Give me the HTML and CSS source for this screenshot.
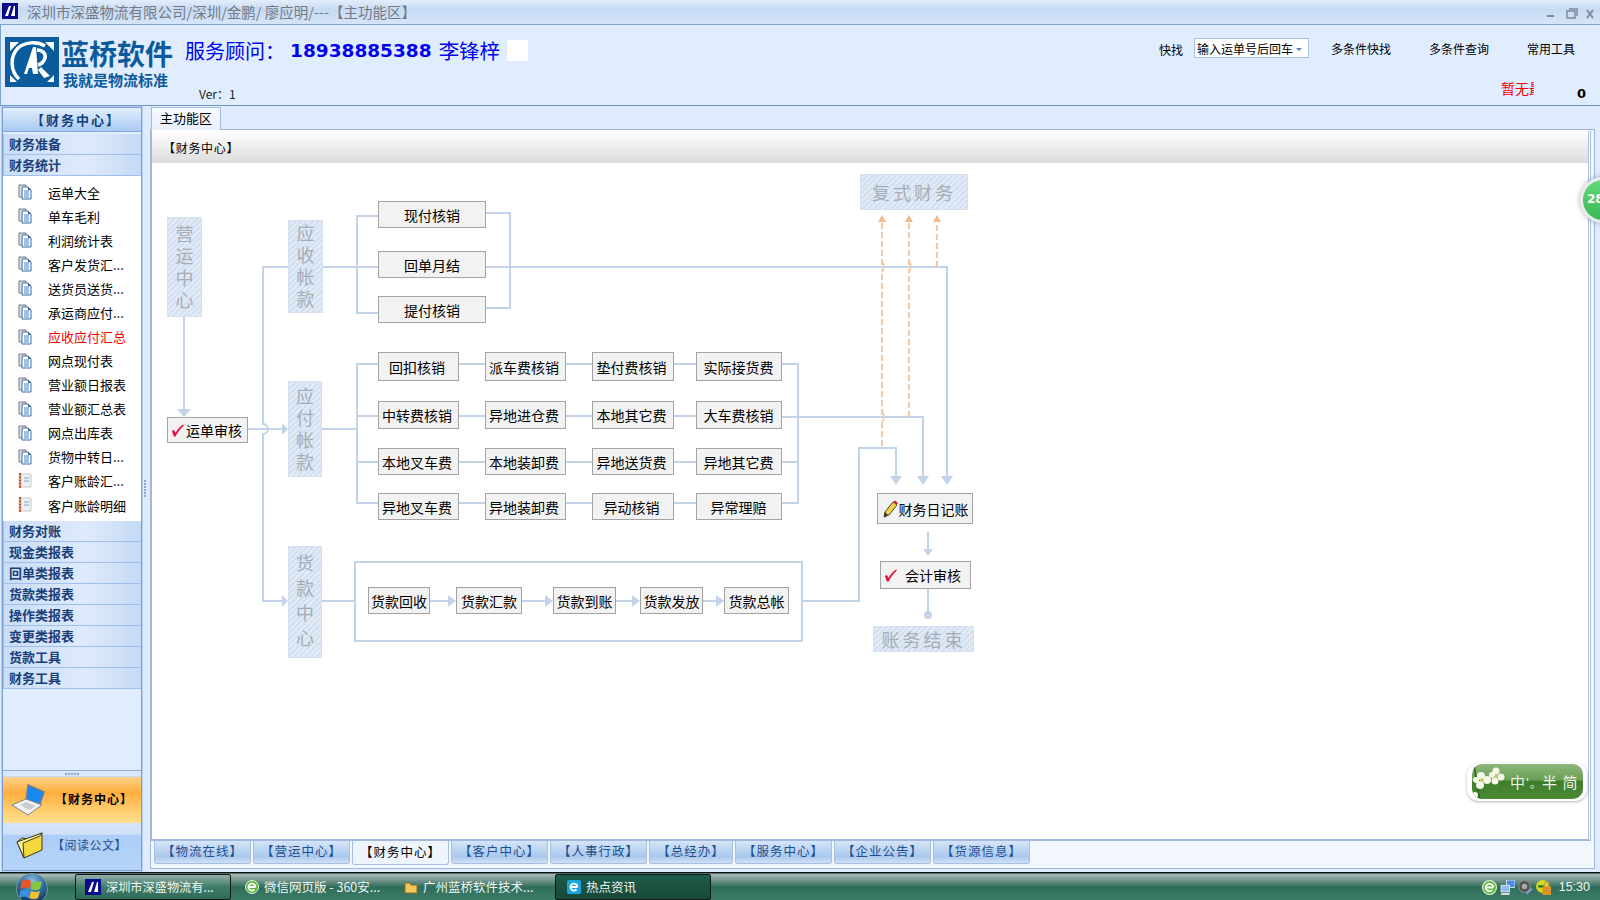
FILE: index.html
```html
<!DOCTYPE html>
<html lang="zh-CN">
  <head>
    <title>深圳市深盛物流有限公司 - 主功能区</title>
    <meta charset="UTF-8" />
    <link rel="stylesheet" href="styles.css">
  </head>
  <body>
    <svg class="defs" width="0" height="0">
      <symbol id="i-doc" viewBox="0 0 14 16">
        <path d="M1 1h7v12H1z" fill="#dfe4ea" stroke="#6f7884"/>
        <path d="M4 3h6l3 3v9H4z" fill="#fff" stroke="#3f6a9e"/>
        <path d="M10 3l3 3h-3z" fill="#2f5f9e"/>
        <path d="M6 7h5M6 9h5M6 11h5M6 13h5" stroke="#3b82d8"/>
      </symbol>
      <symbol id="i-book" viewBox="0 0 14 16">
        <path d="M3 1h10v13H3z" fill="#eef0f2" stroke="#c6cad0"/>
        <path d="M2 0v15" stroke="#b5562e" stroke-width="2"/>
        <path d="M0 3h3M0 6h3M0 9h3M0 12h3" stroke="#e8c8a8"/>
        <path d="M6 5h5M6 8h5" stroke="#7ea6d6"/>
      </symbol>
      <symbol id="i-check" viewBox="0 0 14 14">
        <path d="M1 8l2-1 2 3C7 6 10 3 13 1l1 1C10 6 7 10 5 14H3z" fill="#e8103c"/>
      </symbol>
      <symbol id="i-ie" viewBox="0 0 14 14">
        <circle cx="7" cy="7" r="6.500" fill="#5cb83a" stroke="#e4f4dc"/>
        <path d="M3.500 7h7M10.500 7a3.500 3.500 0 1 0-1 2.500" fill="none" stroke="#fff" stroke-width="1.800"/>
      </symbol>
    </svg>

    <div class="titlebar">
      <svg class="app-icon" viewBox="0 0 16 16"><rect width="16" height="16" fill="#0a0a8c"/><path d="M3 13L7 3h2L6 13zM9 13l3-10h1v10z" fill="#fff"/></svg>
      <span class="title-text">深圳市深盛物流有限公司/深圳/金鹏/ 廖应明/---【主功能区】</span>
      <div class="win-btns">
        <svg width="48" height="12" viewBox="0 0 48 12">
          <path d="M0 7h7v2H0z" fill="#7e8a99"/>
          <path d="M20 3h8v7h-8zM22 1h8v7" fill="none" stroke="#7e8a99" stroke-width="1.5"/>
          <path d="M40 2l6 8M46 2l-6 8" stroke="#7e8a99" stroke-width="2"/>
        </svg>
      </div>
    </div>

    <header class="topbar">
      <div class="logo">
        <svg class="logo-mark" viewBox="0 0 54 50">
          <rect width="54" height="50" fill="#0b5c9c"/>
          <path d="M5 5h9L5 14zM49 5h-9l9 9zM5 45h7l-7-7zM49 45h-7l7-7z" fill="#fff"/>
          <path d="M14 42C5 34 5 19 13 11 20 5 32 4 40 9" fill="none" stroke="#fff" stroke-width="3.500"/>
          <path d="M19 37L28 10h3l2 27h-5l-1-6h-3l-2 6z" fill="#fff"/>
          <path d="M32 13c6 0 9 4 8 8-1 4-4 6-7 7" fill="none" stroke="#fff" stroke-width="3.500"/>
          <path d="M36 30l9 9-6 2-6-8z" fill="#fff"/>
        </svg>
        <div class="logo-words">
          <div class="logo-name">蓝桥软件</div>
          <div class="logo-slogan">我就是物流标准</div>
        </div>
      </div>
      <div class="advisor">
        <div class="advisor-line">
          <span>服务顾问：</span><b class="phone">18938885388</b><span class="person">李锋梓</span><i class="white-box"></i>
        </div>
        <div class="version">Ver：1</div>
      </div>
      <div class="tools">
        <div class="tools-row">
          <span class="find-label">快找</span>
          <div class="combo">输入运单号后回车<i class="combo-arrow"></i></div>
          <span class="tool tool-a">多条件快找</span>
          <span class="tool tool-b">多条件查询</span>
          <span class="tool tool-c">常用工具</span>
        </div>
        <div class="notice-row">
          <span class="notice">暂无最</span>
          <b class="count">0</b>
        </div>
      </div>
    </header>

    <div class="main">
      <aside class="sidebar">
        <div class="side-head">【财务中心】</div>
        <div class="group">财务准备</div>
        <div class="group">财务统计</div>
        <ul class="side-list">
          <li><svg><use href="#i-doc"/></svg><span>运单大全</span></li>
          <li><svg><use href="#i-doc"/></svg><span>单车毛利</span></li>
          <li><svg><use href="#i-doc"/></svg><span>利润统计表</span></li>
          <li><svg><use href="#i-doc"/></svg><span>客户发货汇...</span></li>
          <li><svg><use href="#i-doc"/></svg><span>送货员送货...</span></li>
          <li><svg><use href="#i-doc"/></svg><span>承运商应付...</span></li>
          <li class="current"><svg><use href="#i-doc"/></svg><span>应收应付汇总</span></li>
          <li><svg><use href="#i-doc"/></svg><span>网点现付表</span></li>
          <li><svg><use href="#i-doc"/></svg><span>营业额日报表</span></li>
          <li><svg><use href="#i-doc"/></svg><span>营业额汇总表</span></li>
          <li><svg><use href="#i-doc"/></svg><span>网点出库表</span></li>
          <li><svg><use href="#i-doc"/></svg><span>货物中转日...</span></li>
          <li><svg><use href="#i-book"/></svg><span>客户账龄汇...</span></li>
          <li><svg><use href="#i-book"/></svg><span>客户账龄明细</span></li>
        </ul>
        <div class="group">财务对账</div>
        <div class="group">现金类报表</div>
        <div class="group">回单类报表</div>
        <div class="group">货款类报表</div>
        <div class="group">操作类报表</div>
        <div class="group">变更类报表</div>
        <div class="group">货款工具</div>
        <div class="group">财务工具</div>
        <div class="side-space"></div>
        <div class="side-grip"><i></i><i></i><i></i><i></i><i></i></div>
        <div class="side-btn side-btn-on">
          <svg class="side-btn-icon" viewBox="0 0 34 34">
            <path d="M16 2l16 7-4 12-14-4z" fill="#1689f0" stroke="#6f7f90" stroke-width="1.500"/>
            <path d="M0 22l14-6 16 6-14 10z" fill="#f2f2f2" stroke="#7d838a"/>
            <path d="M8 22l6-3 10 4-7 4z" fill="#c9ccd0"/>
          </svg>
          <span>【财务中心】</span>
        </div>
        <div class="side-btn side-btn-off">
          <svg class="side-btn-icon folder" viewBox="0 0 28 28">
            <path d="M1 11l5-4 6 1 14-6v17L8 27z" fill="#f5d93c" stroke="#3a3a18"/>
            <path d="M1 11l17-6 8-3-2 3L7 12l1 15z" fill="#fff49a" stroke="#3a3a18"/>
          </svg>
          <span>【阅读公文】</span>
        </div>
      </aside>

      <div class="splitter"><i></i><i></i><i></i><i></i><i></i><i></i></div>

      <section class="workspace">
        <div class="top-tabs"><div class="top-tab">主功能区</div></div>
        <div class="page-frame">
          <div class="page">
            <div class="page-title">【财务中心】</div>
            <div class="diagram">
              <svg class="lines" viewBox="150 163 1438 677">
                <g fill="none" stroke="#c3d3e8" stroke-width="2">
                  <path d="M184 318v92"/>
                  <path d="M248 430h34"/>
                  <path d="M288 268h-25V425a5 5 0 0 1 0 10V602h19"/>
                  <path d="M323 268h55M486 268h461v209"/>
                  <path d="M378 217h-21v97h21M486 214h24v95h-24"/>
                  <path d="M322 430h35M378 365h-21v139h21M357 417h21M357 463h21"/>
                  <path d="M458 365h27M566 365h26M674 365h22M458 417h27M566 417h26M674 417h22M459 463h26M566 463h26M674 463h22M459 504h26M566 504h26M674 504h22"/>
                  <path d="M782 365h16v139h-16M782 463h16M782 418h141v59"/>
                  <path d="M322 602h33M355 563h447v79H355z"/>
                  <path d="M802 602h57V449h37v28"/>
                  <path d="M430 602h18M522 602h23M616 602h16M703 602h13"/>
                  <path d="M928 533v17M928 590v26"/>
                </g>
                <g fill="#c3d3e8">
                  <path d="M177 410h14l-7 8zM282 424l6 6-6 6zM282 596l6 6-6 6z"/>
                  <path d="M448 596l8 6-8 6zM545 596l8 6-8 6zM632 596l8 6-8 6zM716 596l8 6-8 6z"/>
                  <path d="M890 477h12l-6 9zM917 477h12l-6 9zM941 477h12l-6 9zM923 550h10l-5 7z"/>
                  <circle cx="928" cy="616" r="4"/>
                </g>
                <g fill="none" stroke="#f5c9a3" stroke-width="2" stroke-dasharray="6 3">
                  <path d="M882 447V420M882 416V270M882 266V222M909 418V270M909 266V222M937 268V222"/>
                </g>
                <g fill="none" stroke="#f5c9a3" stroke-width="1.5">
                  <path d="M882 262q4 6 0 11M909 262q4 6 0 11M882 412q4 6 0 11"/>
                </g>
                <path d="M878 223l4-7 4 7zM905 223l4-7 4 7zM933 223l4-7 4 7z" fill="#f5b98a"/>
              </svg>

              <div class="zone v z-ying">营运中心</div>
              <div class="zone v z-shou">应收帐款</div>
              <div class="zone v z-fu">应付帐款</div>
              <div class="zone v z-huo">货款中心</div>
              <div class="zone h z-fushi">复式财务</div>
              <div class="zone h z-end">账务结束</div>

              <div class="node n-audit"><svg><use href="#i-check"/></svg>运单审核</div>

              <div class="node wide w1">现付核销</div>
              <div class="node wide w2">回单月结</div>
              <div class="node wide w3">提付核销</div>

              <div class="node c1 r1">回扣核销</div>
              <div class="node c2 r1">派车费核销</div>
              <div class="node c3 r1">垫付费核销</div>
              <div class="node c4 r1">实际接货费</div>
              <div class="node c1 r2">中转费核销</div>
              <div class="node c2 r2">异地进仓费</div>
              <div class="node c3 r2">本地其它费</div>
              <div class="node c4 r2">大车费核销</div>
              <div class="node c1 r3">本地叉车费</div>
              <div class="node c2 r3">本地装卸费</div>
              <div class="node c3 r3">异地送货费</div>
              <div class="node c4 r3">异地其它费</div>
              <div class="node c1 r4">异地叉车费</div>
              <div class="node c2 r4">异地装卸费</div>
              <div class="node c3 r4">异动核销</div>
              <div class="node c4 r4">异常理赔</div>

              <div class="node pay p1">货款回收</div>
              <div class="node pay p2">货款汇款</div>
              <div class="node pay p3">货款到账</div>
              <div class="node pay p4">货款发放</div>
              <div class="node pay p5">货款总帐</div>

              <div class="node n-journal">
                <svg viewBox="0 0 16 18">
                  <path d="M2 17l1-5 8-10 4 3-8 10z" fill="#f2d24a" stroke="#4a4a20"/>
                  <path d="M11 2l2-1.500 3 2.500-1 1.500z" fill="#d8202a"/>
                  <path d="M2 17l1-5 3 3z" fill="#333"/>
                </svg>财务日记账
              </div>
              <div class="node n-acct"><svg><use href="#i-check"/></svg>会计审核</div>
            </div>

            <div class="float-ball">28</div>
            <div class="ime-badge">
              <div class="ime-inner">
                <svg class="ime-flower" viewBox="0 0 36 34">
                  <path d="M2 0c2 10 2 22 6 34" fill="none" stroke="#2f5f20" stroke-width="1.500"/>
                  <g fill="#f4f7ea">
                    <circle cx="9" cy="11" r="4"/><circle cx="15" cy="15" r="4"/><circle cx="8" cy="20" r="4"/><circle cx="4" cy="15" r="3"/>
                    <circle cx="24" cy="6" r="3.500"/><circle cx="29" cy="12" r="3.500"/><circle cx="23" cy="16" r="3.500"/><circle cx="20" cy="10" r="3"/>
                    <circle cx="3" cy="30" r="3"/>
                  </g>
                  <circle cx="10" cy="15" r="2" fill="#c8d85a"/><circle cx="24" cy="11" r="1.500" fill="#c8d85a"/>
                </svg>
                <span class="ime-text">中<small>'。</small>半 简</span>
              </div>
            </div>
          </div>
          <div class="page-foot">
            <div class="bottom-tabs">
              <div class="btab">【物流在线】</div>
              <div class="btab">【营运中心】</div>
              <div class="btab active">【财务中心】</div>
              <div class="btab">【客户中心】</div>
              <div class="btab">【人事行政】</div>
              <div class="btab short">【总经办】</div>
              <div class="btab">【服务中心】</div>
              <div class="btab">【企业公告】</div>
              <div class="btab">【货源信息】</div>
            </div>
          </div>
        </div>
      </section>
    </div>

    <footer class="taskbar">
      <div class="orb">
        <svg viewBox="0 0 32 32" width="32" height="32">
          <defs>
            <radialGradient id="orb-bg" cx="50%" cy="25%" r="75%"><stop offset="0" stop-color="#8fbde0"/><stop offset="0.55" stop-color="#2b6a9c"/><stop offset="1" stop-color="#12304f"/></radialGradient>
          </defs>
          <circle cx="16" cy="16" r="15.500" fill="url(#orb-bg)" stroke="#7f9a9a"/>
          <path d="M6 8q4-3 9 0l-1 8q-5-3-10 0z" fill="#e8562a"/>
          <path d="M17 8q4 2 9 0l-2 8q-5 2-9 0z" fill="#86c83a"/>
          <path d="M4 18q5-3 10 0l-1 7q-5-3-10 0z" fill="#3a8fe0"/>
          <path d="M15 18q5 2 9 0l-2 7q-4 2-9 0z" fill="#f2c22e"/>
        </svg>
      </div>
      <div class="task on" >
        <svg class="app-icon" viewBox="0 0 16 16"><rect width="16" height="16" fill="#0a0a8c"/><path d="M3 13L7 3h2L6 13zM9 13l3-10h1v10z" fill="#fff"/></svg>
        深圳市深盛物流有...
      </div>
      <div class="task t-wx"><svg class="task-ico"><use href="#i-ie"/></svg>微信网页版 - 360安...</div>
      <div class="task t-gz">
        <svg class="task-ico" viewBox="0 0 14 14"><path d="M1 3h5l1 2h6v8H1z" fill="#f0c95a" stroke="#8a6d20"/></svg>
        广州蓝桥软件技术...
      </div>
      <div class="task t-hot">
        <svg class="task-ico" viewBox="0 0 14 14"><rect width="14" height="14" rx="2" fill="#17a6e0"/><path d="M3.500 7h7M10.500 7a3.500 3.500 0 1 0-1 2.500" fill="none" stroke="#fff" stroke-width="1.800"/></svg>
        热点资讯
      </div>
      <div class="tray">
        <svg class="tray-ico"><use href="#i-ie"/></svg>
        <svg class="tray-ico" viewBox="0 0 14 14"><rect x="6" y="0" width="8" height="7" fill="#4a8fe0" stroke="#dfe8f5" stroke-width="0.800"/><rect x="1" y="5" width="8" height="6" fill="#8fbdf0" stroke="#dfe8f5" stroke-width="0.800"/><path d="M1 13h8" stroke="#ddd" stroke-width="2"/></svg>
        <svg class="tray-ico" viewBox="0 0 14 14"><circle cx="6" cy="6" r="5.500" fill="#555" stroke="#999" stroke-width="0.800"/><circle cx="6" cy="6" r="2.500" fill="#aaa"/><path d="M8 13l5-5" stroke="#8f9fe0" stroke-width="1.500"/></svg>
        <svg class="tray-ico" viewBox="0 0 14 14"><circle cx="6" cy="6" r="6" fill="#d8d820"/><path d="M2 6h6" stroke="#186a30" stroke-width="2"/><path d="M8 6V4a2 2 0 0 1 4 0v2" fill="none" stroke="#c8a040"/><rect x="6" y="6" width="8" height="8" fill="#d8942a"/></svg>
        <span class="clock">15:30</span>
      </div>
    </footer>
  </body>
</html>
```

FILE: styles.css
```css
* {
  box-sizing: border-box;
}
html, body {
  margin: 0;
  padding: 0;
  height: 100%;
  overflow: hidden;
}
body {
  display: flex;
  flex-direction: column;
  font-family: "Noto Sans CJK SC", "Liberation Sans", sans-serif;
  font-size: 13px;
  color: #000;
  background: #dfecff;
}
.defs {
  position: absolute;
}
ul {
  list-style: none;
  margin: 0;
  padding: 0;
}

/* window title */
.titlebar {
  height: 25px;
  flex: none;
  display: flex;
  align-items: center;
  padding: 0 0 2px 2px;
  background: linear-gradient(#e3eefb, #c6daf4 40%, #d6e5f8);
  border-bottom: 1px solid #7ca2d4;
}
.app-icon {
  width: 16px;
  height: 16px;
  flex: none;
}
.title-text {
  margin-left: 9px;
  font-size: 14.5px;
  color: #737a84;
  white-space: nowrap;
}
.win-btns {
  margin-left: auto;
  padding-right: 5px;
  height: 12px;
}

/* top header */
.topbar {
  height: 81px;
  flex: none;
  display: flex;
  background: #e0edff;
  border-bottom: 1px solid #6f94c8;
  border-left: 1px solid #7ca2d4;
}
.logo {
  display: flex;
  padding: 12px 0 0 4px;
}
.logo-mark {
  width: 54px;
  height: 50px;
}
.logo-words {
  margin-left: 2px;
  color: #0c5a9c;
  font-weight: 700;
  white-space: nowrap;
}
.logo-name {
  font-size: 28px;
  line-height: 32px;
}
.logo-slogan {
  margin: 2px 0 0 2px;
  font-size: 15px;
  line-height: 18px;
}
.advisor {
  margin-left: 12px;
  padding-top: 12px;
}
.advisor-line {
  display: flex;
  align-items: center;
  height: 26px;
  font-size: 20px;
  color: #0000f0;
  white-space: nowrap;
}
.phone {
  margin-left: 5px;
  font-family: "DejaVu Sans", sans-serif;
  font-size: 18.5px;
}
.person {
  margin-left: 7px;
  font-size: 20.5px;
}
.white-box {
  width: 21px;
  height: 21px;
  margin-left: 7px;
  background: #fff;
}
.version {
  margin: 22px 0 0 14px;
  font-size: 12px;
  line-height: 18px;
  color: #222;
}
.tools {
  margin-left: auto;
  width: 441px;
  padding-top: 13px;
}
.tools-row {
  display: flex;
  align-items: center;
  height: 20px;
  font-size: 12px;
  white-space: nowrap;
}
.find-label {
  padding-top: 3px;
}
.combo {
  width: 115px;
  height: 20px;
  margin-left: 11px;
  padding-left: 2px;
  display: flex;
  align-items: center;
  justify-content: space-between;
  background: #fff;
  border: 1px solid #a9c0e0;
}
.combo-arrow {
  width: 0;
  height: 0;
  margin: 2px 6px 0 0;
  border: 3px solid transparent;
  border-top: 3px solid #5d7fb5;
  border-bottom: 0;
}
.tool-a { margin-left: 22px; }
.tool-b { margin-left: 38px; }
.tool-c { margin-left: 38px; }
.notice-row {
  display: flex;
  align-items: center;
  margin-top: 19px;
  height: 22px;
}
.notice {
  width: 33px;
  margin-left: 342px;
  overflow: hidden;
  white-space: nowrap;
  font-size: 14px;
  color: #f00000;
}
.count {
  align-self: flex-end;
  margin: 0 0 -2px 43px;
  font-family: "DejaVu Sans", sans-serif;
  font-size: 13px;
  line-height: 14px;
}

.main {
  flex: 1;
  min-height: 0;
  display: flex;
}

/* left menu */
.sidebar {
  width: 140px;
  flex: none;
  margin: 1px 0 1px 2px;
  display: flex;
  flex-direction: column;
  background: #e0edff;
  border: 1px solid #7aa0d4;
  outline: 1px solid #b7cdeb;
}
.side-head {
  height: 24px;
  flex: none;
  padding-left: 8px;
  text-align: center;
  font-weight: 700;
  line-height: 24px;
  letter-spacing: 2px;
  color: #123f7c;
  background: linear-gradient(#e2eefd, #a9c9f2);
  border-bottom: 1px solid #83a9dc;
  margin-bottom: 2px;
}
.group {
  height: 21px;
  flex: none;
  padding-left: 5px;
  font-weight: 700;
  line-height: 19px;
  color: #1a3f78;
  background: linear-gradient(90deg, #c9ddf6, #dfeafc 60%, #c5daf5);
  border-bottom: 1px solid #9fc0ea;
  border-left: 1px solid #9fc0ea;
}
.side-list {
  height: 345px;
  flex: none;
  padding-top: 4px;
  background: #fff;
}
.side-list li {
  height: 24.08px;
  display: flex;
  align-items: center;
}
.side-list svg {
  width: 14px;
  height: 16px;
  margin-left: 15px;
  flex: none;
}
.side-list span {
  margin-left: 16px;
  white-space: nowrap;
}
.side-list .current span {
  color: #f00000;
}
.side-space {
  flex: 1;
}
.side-grip {
  height: 7px;
  flex: none;
  display: flex;
  justify-content: center;
  align-items: center;
  gap: 1px;
  background: #dbe8fb;
  border-top: 1px solid #8fb0de;
  border-bottom: 1px solid #c6d9f3;
}
.side-grip i, .splitter i {
  width: 2px;
  height: 2px;
  background: #86a6d4;
}
.side-btn {
  flex: none;
  display: flex;
  align-items: center;
  font-size: 12px;
}
.side-btn-on {
  height: 46px;
  font-weight: 700;
  background: linear-gradient(#fbd089, #ffae3e 35%, #ffcf72 75%, #ffe08f);
}
.side-btn-off {
  height: 47px;
  color: #23518f;
  background: linear-gradient(#d6e5f9 0, #cfe0f7 24%, #accdf7 26%, #b6d4f9);
}
.side-btn-icon {
  width: 34px;
  height: 34px;
  margin-left: 9px;
}
.side-btn-on span {
  margin: 0 0 4px 9px;
  letter-spacing: 1px;
}
.folder {
  width: 28px;
  height: 28px;
  margin: 0 0 4px 13px;
}
.side-btn-off span {
  margin: 0 0 4px 8px;
  letter-spacing: 0.5px;
}

.splitter {
  width: 8px;
  flex: none;
  padding: 374px 0 0 2px;
  display: flex;
  flex-direction: column;
  gap: 1px;
}

/* work area */
.workspace {
  width: 1445px;
  flex: none;
  margin-top: 1px;
  margin-bottom: 3px;
  display: flex;
  flex-direction: column;
}
.top-tabs {
  height: 23px;
  flex: none;
  padding-left: 1px;
  border-bottom: 1px solid #9db3da;
}
.top-tab {
  width: 70px;
  height: 23px;
  padding-left: 8px;
  line-height: 20px;
  background: linear-gradient(#f6faff, #e9f1fd);
  border: 1px solid #a6bbdd;
  border-bottom: 0;
}
.page-frame {
  flex: 1;
  min-height: 0;
  display: flex;
  flex-direction: column;
  background: #f2f6fd;
  border: 1px solid #a3b8dd;
  border-top: 0;
}
.page {
  height: 711px;
  flex: none;
  position: relative;
  display: flex;
  flex-direction: column;
  margin-right: 3px;
  background: #fff;
  border-top: 1px solid #fff;
  border-right: 3px double #a9bfe0;
  border-bottom: 2px solid #a3b8dd;
  border-left: 1px solid #a3b8dd;
}
.page-title {
  height: 32px;
  flex: none;
  padding-left: 11px;
  font-size: 12px;
  line-height: 33px;
  letter-spacing: 0.7px;
  background: linear-gradient(#fff, #dcdcdc);
}
.diagram {
  position: relative;
  flex: 1;
  margin: -1px 0 0 -2px;
}
.lines {
  position: absolute;
  left: 0;
  top: 0;
  width: 1438px;
  height: 677px;
}

/* diagram boxes, left/top are taken from the canvas at x150 y163 */
.zone {
  position: absolute;
  display: flex;
  align-items: center;
  justify-content: center;
  color: #a7adb5;
  font-size: 18px;
  background: repeating-linear-gradient(135deg, #d3e0f1 0, #d3e0f1 2px, #e2ebf6 2px, #e2ebf6 4px);
  border: 1px solid #d5e0ef;
}
.zone.v {
  writing-mode: vertical-rl;
  letter-spacing: 4px;
  padding-top: 3px;
}
.zone.h {
  letter-spacing: 3px;
}
.z-ying { left: 17px; top: 55px; width: 35px; height: 100px; }
.z-shou { left: 138px; top: 58px; width: 35px; height: 93px; }
.z-fu { left: 138px; top: 219px; width: 34px; height: 96px; }
.z-huo { left: 138px; top: 384px; width: 34px; height: 112px; }
.zone.z-huo { letter-spacing: 7px; }
.z-fushi { left: 710px; top: 12px; width: 108px; height: 36px; }
.z-end { left: 723px; top: 464px; width: 101px; height: 26px; }

.node {
  position: absolute;
  display: flex;
  align-items: center;
  justify-content: center;
  font-size: 14px;
  white-space: nowrap;
  background: #f2f2f2;
  border: 1px solid #a3a3a3;
}
.node svg {
  flex: none;
}
.wide { left: 228px; width: 108px; height: 27px; }
.w1 { top: 39px; }
.w2 { top: 89px; }
.w3 { top: 134px; }

.c1 { left: 228px; width: 81px; padding-right: 3px; }
.c2 { left: 335px; width: 81px; padding-right: 3px; }
.c3 { left: 442px; width: 82px; padding-right: 3px; }
.c4 { left: 546px; width: 86px; padding-right: 1px; }
.r1 { top: 190px; height: 29px; }
.r2 { top: 239px; height: 28px; }
.r3 { top: 286px; height: 27px; }
.r4 { top: 331px; height: 27px; }

.pay { top: 425px; height: 27px; }
.p1 { left: 218px; width: 62px; }
.p2 { left: 306px; width: 66px; }
.p3 { left: 403px; width: 63px; }
.p4 { left: 490px; width: 63px; }
.p5 { left: 574px; width: 65px; }

.n-audit {
  left: 17px;
  top: 255px;
  width: 81px;
  height: 26px;
  justify-content: flex-start;
  padding-left: 3px;
  gap: 2px;
}
.n-audit svg {
  width: 13px;
  height: 14px;
}
.n-journal {
  left: 727px;
  top: 331px;
  width: 96px;
  height: 31px;
  gap: 1px;
}
.n-journal svg {
  width: 16px;
  height: 18px;
}
.n-acct {
  left: 730px;
  top: 399px;
  width: 91px;
  height: 28px;
  justify-content: flex-start;
  padding-left: 3px;
  gap: 8px;
}
.n-acct svg {
  width: 13px;
  height: 14px;
}

/* floating things over the page */
.float-ball {
  position: absolute;
  left: 1428px;
  top: 46px;
  width: 46px;
  height: 46px;
  padding: 12px 0 0 4px;
  border-radius: 50%;
  font-family: "DejaVu Sans", sans-serif;
  font-size: 12px;
  font-weight: 700;
  color: #fff;
  background: linear-gradient(#66d878, #38b854);
  border: 3px solid #e8ecef;
  box-shadow: 0 0 5px rgba(0, 0, 0, 0.35);
}
.ime-badge {
  position: absolute;
  left: 1315px;
  top: 632px;
  width: 120px;
  height: 38px;
  padding: 1px 4px 2px 5px;
  background: #fff;
  border-radius: 12px;
  box-shadow: 0 1px 3px rgba(0, 0, 0, 0.3);
}
.ime-inner {
  height: 100%;
  display: flex;
  align-items: center;
  border-radius: 10px;
  background: linear-gradient(#8cb87a, #6c9f56 45%, #3f7f2c 50%, #4a8a34);
  overflow: hidden;
}
.ime-flower {
  width: 36px;
  height: 34px;
  flex: none;
}
.ime-text {
  margin-left: 2px;
  font-size: 15px;
  color: #f1f6ea;
  white-space: nowrap;
  letter-spacing: 1px;
}
.ime-text small {
  font-size: 11px;
}

.page-foot {
  flex: 1;
  padding: 0 0 0 3px;
}
.bottom-tabs {
  display: flex;
  align-items: flex-start;
  gap: 2px;
}
.btab {
  width: 97px;
  height: 23px;
  text-align: center;
  font-size: 12.5px;
  line-height: 20px;
  letter-spacing: 1px;
  color: #1d4f8f;
  background: linear-gradient(#d6e5f8, #aac8ee 70%, #cfe0f6);
  border: 1px solid #a8bfdf;
  border-top: 0;
  border-radius: 0 0 3px 3px;
  white-space: nowrap;
}
.btab.short {
  width: 84px;
}
.btab.active {
  height: 26px;
  margin-top: -2px;
  line-height: 26px;
  color: #000;
  background: #eef4fc;
}

/* windows taskbar */
.taskbar {
  height: 28px;
  flex: none;
  display: flex;
  align-items: center;
  position: relative;
  color: #f2f6f4;
  font-size: 12.5px;
  background: linear-gradient(#0b1512 0, #0b1512 1px, #a9bcb8 2px, #76978f 8px, #2f6d5a 15px, #3c7d68 100%);
}
.orb {
  width: 32px;
  height: 32px;
  align-self: flex-start;
  margin: 1px 0 0 16px;
  flex: none;
}
.task {
  height: 26px;
  display: flex;
  align-items: center;
  white-space: nowrap;
  margin-top: 1px;
}
.task.on {
  width: 156px;
  margin-left: 27px;
  padding-left: 9px;
  gap: 5px;
  font-size: 12.2px;
  background: linear-gradient(#97ada9, #3d7d69 50%, #2f6a58);
  border: 1px solid #0e1a17;
  border-radius: 2px;
}
.task-ico {
  width: 14px;
  height: 14px;
  flex: none;
  margin-right: 5px;
}
.t-wx {
  margin-left: 14px;
  width: 159px;
}
.t-gz {
  width: 151px;
}
.t-hot {
  width: 156px;
  padding-left: 11px;
  background: linear-gradient(#1f5c4b, #174838);
  border: 1px solid #0e1a17;
  border-radius: 2px;
}
.tray {
  margin-left: auto;
  padding-right: 10px;
  display: flex;
  align-items: center;
  gap: 3px;
  margin-top: 2px;
}
.tray-ico {
  width: 15px;
  height: 15px;
  flex: none;
}
.clock {
  margin-left: 5px;
  font-family: "Liberation Sans", sans-serif;
  font-size: 12.5px;
}
```
